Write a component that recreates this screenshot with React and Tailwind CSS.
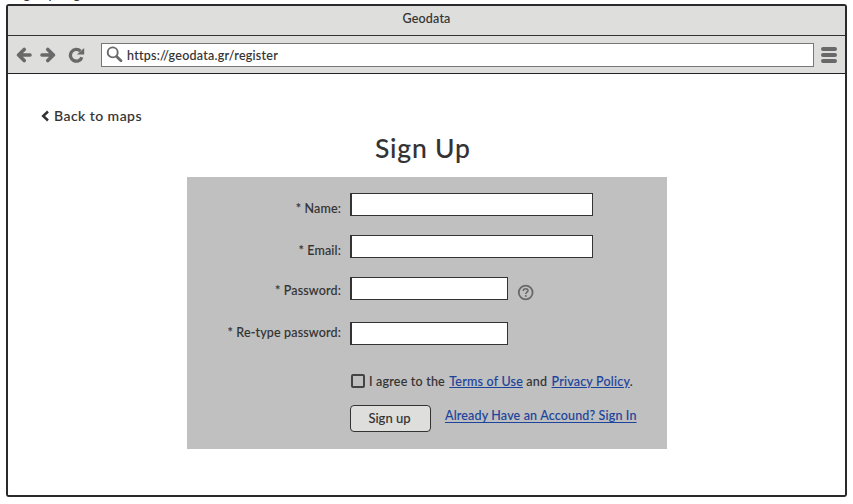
const inputBase = 'h-[23px] border border-l-2 border-[#333333] bg-white outline-none block';

function Field({ label, className = '', labelClass, inputClass, type = 'text', children }) {
  return (
    <div className={`flex h-[23px] ${className}`}>
      <label className="flex w-[163px] shrink-0 justify-end pr-[9px] whitespace-nowrap">
        <span className={`text-[12.5px] leading-[16px] tracking-[0.15px] ${labelClass}`}>{label}</span>
      </label>
      <input type={type} className={`${inputBase} ${inputClass}`} />
      {children}
    </div>
  );
}

function Arrow({ className = '' }) {
  return (
    <svg className={className} width="16" height="16" viewBox="0 0 16 16" fill="none" stroke="#696969" strokeWidth="3.6" strokeLinecap="round" strokeLinejoin="round">
      <path d="M14 8H3.5M8.2 2.4L2.6 8L8.2 13.6" />
    </svg>
  );
}

function Reload() {
  return (
    <svg className="ml-3" width="17" height="16" viewBox="0 0 17 16" fill="none">
      <path d="M12.4 4A5.9 5.9 0 1 0 13.9 10.2" stroke="#696969" strokeWidth="3.3" />
      <path d="M16.2 .9V7.6H8.9Z" fill="#696969" />
    </svg>
  );
}

export default function App() {
  return (
    <div className="h-[504px] w-[853px] overflow-hidden bg-white font-['Lato',sans-serif] text-[13px] font-medium text-[#333333] [-webkit-text-stroke:0.1px]">
      <div className="flex h-1 items-end overflow-hidden pl-[13px]">
        <span className="mb-[4px] text-[13px] leading-[12px] tracking-[0.1px] whitespace-nowrap">Sign up Page</span>
      </div>

      <div className="ml-[6px] flex h-[493px] w-[841px] flex-col overflow-hidden rounded-[3px] border-2 border-[#2b292b]">
        <div className="flex h-[30px] shrink-0 justify-center border-b border-[#333333] bg-[#dededd] pt-[5px]">
          <span className="text-[12.5px] leading-[16px] tracking-[0.2px]">Geodata</span>
        </div>

        <div className="flex h-[38px] shrink-0 items-center border-b border-[#222222] bg-[#dededd] pl-2">
          <Arrow />
          <Arrow className="ml-2 rotate-180" />
          <Reload />
          <div className="ml-4 flex h-[24px] w-[713px] items-center border border-[#777777] bg-white pl-1">
            <svg width="17" height="17" viewBox="0 0 17 17" fill="none" stroke="#696969">
              <circle cx="6.7" cy="6.4" r="5" strokeWidth="1.9" />
              <path d="M10.6 10.4L15 14.8" strokeWidth="2.8" strokeLinecap="round" />
            </svg>
            <span className="ml-1 pt-[2px] text-[12.5px] leading-4 tracking-[0.25px]">https://geodata.gr/register</span>
          </div>
          <div className="ml-[7px] flex flex-col gap-[2px]">
            <i className="h-[4px] w-[16px] rounded-full bg-[#696969]" />
            <i className="h-[4px] w-[16px] rounded-full bg-[#696969]" />
            <i className="h-[4px] w-[16px] rounded-full bg-[#696969]" />
          </div>
        </div>

        <main className="flex flex-1 flex-col bg-white">
          <a className="mt-[32px] ml-[33px] flex h-[18px] items-center self-start">
            <svg className="mt-[2px]" width="8" height="12" viewBox="0 0 8 12" fill="none" stroke="#333333" strokeWidth="2.5">
              <path d="M7 1.5L2.2 6L7 10.5" />
            </svg>
            <span className="ml-[5px] text-[14px] tracking-[0.46px] whitespace-nowrap">Back to maps</span>
          </a>

          <h1 className="mt-[8px] h-[32px] pl-[367px] text-[26.5px] leading-[33px] tracking-[0.8px] whitespace-nowrap">Sign Up</h1>

          <form className="mt-[13px] ml-[179px] flex h-[272px] w-[480px] shrink-0 flex-col bg-[#c0c0c0] pt-4">
            <Field label="* Name:" labelClass="pt-[8px]" inputClass="w-[243px]" />
            <Field label="* Email:" className="mt-[19px]" labelClass="pt-[8px]" inputClass="w-[243px]" />
            <Field label="* Password:" className="mt-[19px]" labelClass="pt-[6px]" inputClass="w-[158px]" type="password">
              <svg className="mt-[7px] ml-[9px]" width="17" height="17" viewBox="0 0 17 17" fill="none" stroke="#696969">
                <circle cx="8.7" cy="8.5" r="6.9" strokeWidth="1.8" />
                <path d="M6.3 6.9C6.3 4.1 11 4.1 11 6.7C11 8.2 8.8 8.2 8.8 10" strokeWidth="1.6" />
                <path d="M8.8 11.1V12.8" strokeWidth="1.7" />
              </svg>
            </Field>
            <Field label="* Re-type password:" className="mt-[22px]" labelClass="pt-[3px]" inputClass="w-[158px]" type="password" />

            <div className="mt-[28px] ml-[164px] flex h-[16px] items-center whitespace-nowrap">
              <span className="h-[14px] w-[14px] rounded-[2px] border-2 border-[#444444]" />
              <span className="ml-[4px] pt-[3px] text-[12.5px] tracking-[0.2px]">
                I agree to the <a className="ml-[1px] text-[#1c449c] underline underline-offset-1">Terms of Use</a> and{' '}
                <a className="ml-[1px] text-[#1c449c] underline underline-offset-1">Privacy Policy</a>.
              </span>
            </div>

            <div className="mt-[16px] ml-[163px] flex h-[27px] whitespace-nowrap">
              <button type="button" className="h-[27px] w-[81px] rounded-[4px] border border-[#333333] bg-[#dededd] pr-[2px] text-[13px]">Sign up</button>
              <a className="mt-[3px] ml-[14px] h-4 text-[12.5px] leading-4 tracking-[0.16px] text-[#1c449c] underline underline-offset-2">Already Have an Accound? Sign In</a>
            </div>
          </form>
        </main>
      </div>
    </div>
  );
}
